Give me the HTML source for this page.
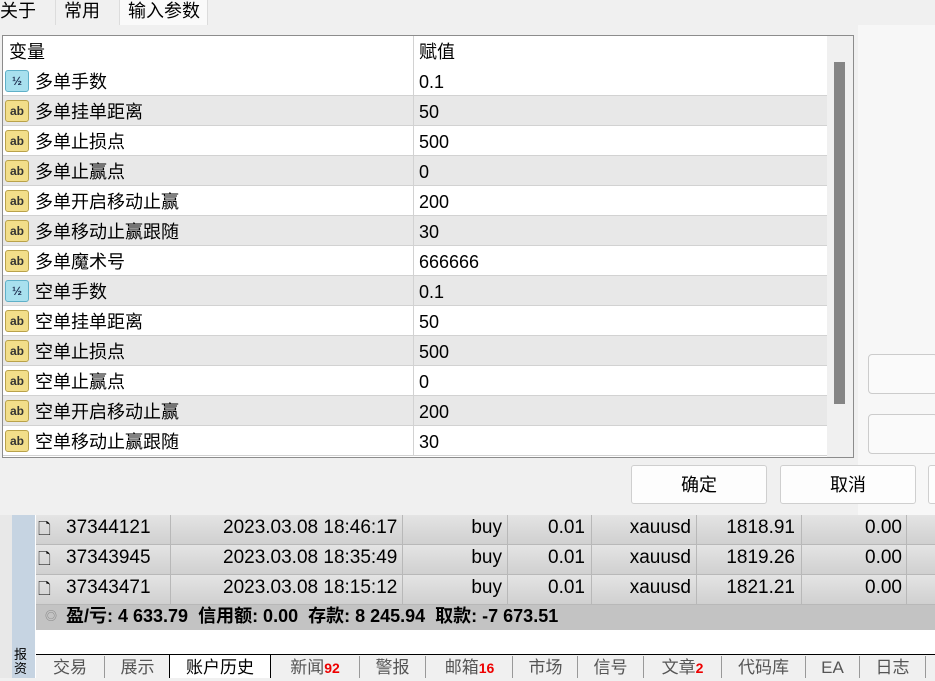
<!DOCTYPE html>
<html><head><meta charset="utf-8"><style>
*{margin:0;padding:0;box-sizing:border-box}
body{width:935px;height:678px;overflow:hidden;background:#f0f0f0;position:relative;font-family:"Liberation Sans","Noto Sans CJK SC",sans-serif;font-size:18px;color:#000}
.a{position:absolute}
.tab{position:absolute;top:0;height:25px;line-height:22px;padding:0 8px;background:#f0f0f0;border-right:1px solid #dcdcdc;white-space:nowrap}
.grid{left:2px;top:35px;width:852px;height:423px;border:1px solid #8c8c8c;background:#fff;overflow:hidden}
.row{position:absolute;left:0;width:824px;height:30px;border-bottom:1px solid #d2d2d2;line-height:32px}
.row.g{background:#e8e8e8}
.row span{position:absolute;top:0}
.n{left:32px}.v{left:416px}
.row .div{position:absolute;left:410px;top:0;width:1px;height:30px;background:#d2d2d2}
.ic{position:absolute;left:2px;top:4px;width:24px;height:22px;border-radius:3px;font-size:12px;font-weight:bold;line-height:20px;text-align:center;font-family:"Liberation Sans",sans-serif}
.ab{background:#f2de8a;border:1px solid #b9a24a;color:#333}
.hf{background:#a8e0ee;border:1px solid #5fb0c8;color:#235}
.btn{position:absolute;height:39px;background:#fdfdfd;border:1px solid #cfcfcf;border-radius:3px;text-align:center;line-height:39px}
.tr{position:absolute;left:36px;width:900px;height:30px;background:linear-gradient(#e4e4e4,#d0d0d0);border-bottom:1px solid #b8b8b8;line-height:26px;font-size:19px}
.tr span{position:absolute;top:0}
.tr i{position:absolute;top:0;width:1px;height:30px;background:#b8b8b8}
.bt{position:absolute;top:656px;height:22px;line-height:24px;font-size:17px;color:#555;border-left:1px solid #999;text-align:center}
.red{color:#e00;font-weight:bold;font-size:14px}
</style></head><body>
<div class="tab" style="left:0;width:56px;padding-left:0">关于</div>
<div class="tab" style="left:56px;width:64px">常用</div>
<div class="tab" style="left:120px;width:88px;background:#fafafa;height:26px">输入参数</div>
<div class="a" style="left:0;top:25px;width:935px;height:490px;background:#f7f7f7"></div>
<div class="a" style="left:0;top:25px;width:858px;height:490px;background:#f0f0f0"></div>
<div class="a grid">
<div class="row" style="top:0;height:30px;border-bottom:none"><span style="left:6px">变量</span><span class="v" style="left:416px">赋值</span><div class="div"></div></div>
<div class="row" style="top:30px"><div class="ic hf">½</div><span class="n">多单手数</span><span class="v">0.1</span><div class="div"></div></div>
<div class="row g" style="top:60px"><div class="ic ab">ab</div><span class="n">多单挂单距离</span><span class="v">50</span><div class="div"></div></div>
<div class="row" style="top:90px"><div class="ic ab">ab</div><span class="n">多单止损点</span><span class="v">500</span><div class="div"></div></div>
<div class="row g" style="top:120px"><div class="ic ab">ab</div><span class="n">多单止赢点</span><span class="v">0</span><div class="div"></div></div>
<div class="row" style="top:150px"><div class="ic ab">ab</div><span class="n">多单开启移动止赢</span><span class="v">200</span><div class="div"></div></div>
<div class="row g" style="top:180px"><div class="ic ab">ab</div><span class="n">多单移动止赢跟随</span><span class="v">30</span><div class="div"></div></div>
<div class="row" style="top:210px"><div class="ic ab">ab</div><span class="n">多单魔术号</span><span class="v">666666</span><div class="div"></div></div>
<div class="row g" style="top:240px"><div class="ic hf">½</div><span class="n">空单手数</span><span class="v">0.1</span><div class="div"></div></div>
<div class="row" style="top:270px"><div class="ic ab">ab</div><span class="n">空单挂单距离</span><span class="v">50</span><div class="div"></div></div>
<div class="row g" style="top:300px"><div class="ic ab">ab</div><span class="n">空单止损点</span><span class="v">500</span><div class="div"></div></div>
<div class="row" style="top:330px"><div class="ic ab">ab</div><span class="n">空单止赢点</span><span class="v">0</span><div class="div"></div></div>
<div class="row g" style="top:360px"><div class="ic ab">ab</div><span class="n">空单开启移动止赢</span><span class="v">200</span><div class="div"></div></div>
<div class="row" style="top:390px"><div class="ic ab">ab</div><span class="n">空单移动止赢跟随</span><span class="v">30</span><div class="div"></div></div>
<div class="a" style="left:824px;top:0;width:27px;height:421px;background:#f0f0f0"></div>
<div class="a" style="left:831px;top:26px;width:11px;height:342px;background:#858585"></div>
</div>
<div class="a" style="left:868px;top:354px;width:70px;height:40px;border:1px solid #ccc;border-radius:4px;background:#fafafa"></div>
<div class="a" style="left:868px;top:414px;width:70px;height:40px;border:1px solid #ccc;border-radius:4px;background:#fafafa"></div>
<div class="btn" style="left:631px;top:465px;width:136px">确定</div>
<div class="btn" style="left:780px;top:465px;width:136px">取消</div>
<div class="btn" style="left:928px;top:465px;width:20px"></div>
<!-- bottom -->
<div class="a" style="left:0;top:515px;width:935px;height:163px;background:#fff"></div>
<div class="a" style="left:0;top:515px;width:12px;height:163px;background:#e8e8e8"></div>
<div class="a" style="left:12px;top:515px;width:23px;height:163px;background:#c6d4e2"></div>
<div class="a" style="left:14px;top:648px;font-size:13px;line-height:14px;width:18px">报<br>资</div>
<div class="tr" style="top:515px"><span style="left:2px;top:2px;font-size:16px">🗋</span><span style="left:30px">37344121</span><span style="left:187px">2023.03.08 18:46:17</span><span style="right:434px">buy</span><span style="right:351px">0.01</span><span style="right:245px">xauusd</span><span style="right:141px">1818.91</span><span style="right:34px">0.00</span><i style="left:134px"></i><i style="left:366px"></i><i style="left:471px"></i><i style="left:555px"></i><i style="left:660px"></i><i style="left:765px"></i><i style="left:870px"></i></div>
<div class="tr" style="top:545px"><span style="left:2px;top:2px;font-size:16px">🗋</span><span style="left:30px">37343945</span><span style="left:187px">2023.03.08 18:35:49</span><span style="right:434px">buy</span><span style="right:351px">0.01</span><span style="right:245px">xauusd</span><span style="right:141px">1819.26</span><span style="right:34px">0.00</span><i style="left:134px"></i><i style="left:366px"></i><i style="left:471px"></i><i style="left:555px"></i><i style="left:660px"></i><i style="left:765px"></i><i style="left:870px"></i></div>
<div class="tr" style="top:575px"><span style="left:2px;top:2px;font-size:16px">🗋</span><span style="left:30px">37343471</span><span style="left:187px">2023.03.08 18:15:12</span><span style="right:434px">buy</span><span style="right:351px">0.01</span><span style="right:245px">xauusd</span><span style="right:141px">1821.21</span><span style="right:34px">0.00</span><i style="left:134px"></i><i style="left:366px"></i><i style="left:471px"></i><i style="left:555px"></i><i style="left:660px"></i><i style="left:765px"></i><i style="left:870px"></i></div>
<div class="a" style="left:36px;top:605px;width:900px;height:25px;background:#c3c3c3;line-height:22px;font-weight:bold;font-size:18px"><span style="position:absolute;left:9px;top:0;color:#888;font-size:12px">◎</span><span style="position:absolute;left:30px">盈/亏: 4 633.79&nbsp; 信用额: 0.00&nbsp; 存款: 8 245.94&nbsp; 取款: -7 673.51</span></div>
<div class="a" style="left:36px;top:654px;width:900px;height:1px;background:#000"></div>
<div class="a" style="left:36px;top:655px;width:900px;height:23px;background:#f0f0f0"></div>
<div class="bt" style="left:36px;width:68px;border:none">交易</div>
<div class="bt" style="left:104px;width:66px">展示</div>
<div class="a" style="left:169px;top:654px;width:102px;height:24px;background:#fff;border:1px solid #000;border-bottom:none;text-align:center;line-height:26px;font-size:17px">账户历史</div>
<div class="bt" style="left:271px;width:88px;border:none">新闻<span class="red">92</span></div>
<div class="bt" style="left:359px;width:66px">警报</div>
<div class="bt" style="left:425px;width:88px">邮箱<span class="red">16</span></div>
<div class="bt" style="left:512px;width:66px">市场</div>
<div class="bt" style="left:577px;width:66px">信号</div>
<div class="bt" style="left:643px;width:78px">文章<span class="red">2</span></div>
<div class="bt" style="left:721px;width:84px">代码库</div>
<div class="bt" style="left:805px;width:54px">EA</div>
<div class="bt" style="left:859px;width:66px">日志</div>
<div class="bt" style="left:925px;width:20px"></div>
</body></html>
